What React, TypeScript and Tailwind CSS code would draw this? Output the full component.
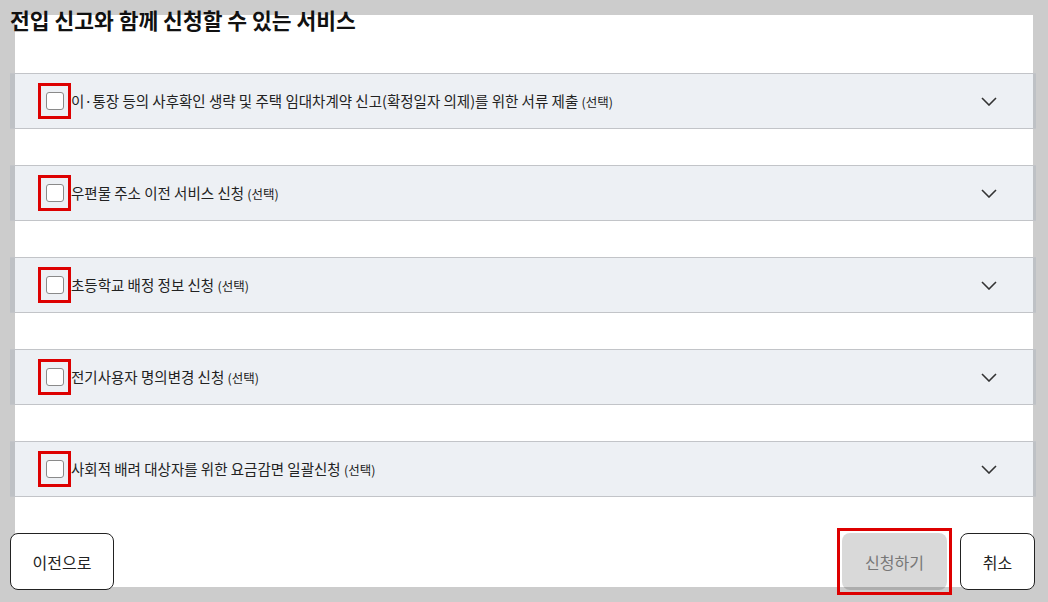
import React from 'react';

const services = [
    '이·통장 등의 사후확인 생략 및 주택 임대차계약 신고(확정일자 의제)를 위한 서류 제출',
    '우편물 주소 이전 서비스 신청',
    '초등학교 배정 정보 신청',
    '전기사용자 명의변경 신청',
    '사회적 배려 대상자를 위한 요금감면 일괄신청',
];

const Chevron: React.FC = () => (
    <svg width="16" height="9" viewBox="0 0 16 9" fill="none">
        <polyline points="1,1 8,8 15,1" stroke="#333333" strokeWidth="1.6" />
    </svg>
);

const ServiceRow: React.FC<{ label: string }> = ({ label }) => (
    <div className="flex items-center h-[56px] border-y border-[#c2c4c8] bg-[rgba(30,60,120,0.08)] pl-[28px] pr-[39px]">
        {/* highlighted checkbox */}
        <div className="w-[33px] h-[36px] border-[3px] border-[#dd0000] flex items-center justify-center shrink-0">
            <div className="w-[18px] h-[18px] rounded-[3px] border border-[#8a8a8a] bg-white" />
        </div>
        <p className="flex-1 text-[14.5px] text-[#222222] whitespace-nowrap">
            {label} <span className="text-[12.5px]">(선택)</span>
        </p>
        <Chevron />
    </div>
);

export default function App() {
    return (
        <div
            className="h-[602px] w-[1048px] bg-[#cccccc] p-[15px] overflow-hidden"
            style={{ fontFamily: '"Noto Sans CJK KR", "Noto Sans", sans-serif' }}
        >
            <div className="h-[572px] bg-white flex flex-col">
                <h2 className="-mt-[15px] -ml-[5px] h-[40px] leading-[40px] text-[21.5px] font-bold text-[#111111]">
                    전입 신고와 함께 신청할 수 있는 서비스
                </h2>

                <div className="mt-[33px] -ml-[5px] -mr-[3px] flex flex-col gap-[36px]">
                    {services.map(s => (
                        <ServiceRow key={s} label={s} />
                    ))}
                </div>

                <div className="mt-[36px] -ml-[5px] -mr-[2px] flex items-start">
                    <button className="w-[104px] h-[57px] rounded-[8px] border border-[#222222] bg-white text-[16px] text-[#222222]">
                        이전으로
                    </button>
                    <div className="ml-auto -mt-[5px] border-[3px] border-[#dd0000] p-[2px]">
                        <button className="w-[105px] h-[57px] rounded-[8px] bg-[rgba(0,0,0,0.15)] text-[16px] text-[#777777]">
                            신청하기
                        </button>
                    </div>
                    <button className="ml-[8px] w-[75px] h-[57px] rounded-[8px] border border-[#222222] bg-white text-[16px] text-[#222222]">
                        취소
                    </button>
                </div>
            </div>
        </div>
    );
}
